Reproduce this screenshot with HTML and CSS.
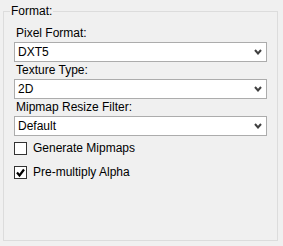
FILE: index.html
```html
<!DOCTYPE html>
<html lang="en">
  <head>
    <meta charset="UTF-8" />
    <meta name="viewport" content="width=device-width, initial-scale=1.0" />
    <title>Format</title>
    <link rel="stylesheet" href="styles.css">
  </head>
  <body>
    <!-- texture format group -->
    <fieldset class="group">
      <legend>Format:</legend>

      <div class="field-label">Pixel Format:</div>
      <div class="combo">
        <span>DXT5</span>
        <svg class="arrow" width="8" height="6" viewBox="0 0 8 6"><path d="M1 1 L4 4.5 L7 1" fill="none" stroke="#404040" stroke-width="2"/></svg>
      </div>

      <div class="field-label">Texture Type:</div>
      <div class="combo">
        <span>2D</span>
        <svg class="arrow" width="8" height="6" viewBox="0 0 8 6"><path d="M1 1 L4 4.5 L7 1" fill="none" stroke="#404040" stroke-width="2"/></svg>
      </div>

      <div class="field-label">Mipmap Resize Filter:</div>
      <div class="combo">
        <span>Default</span>
        <svg class="arrow" width="8" height="6" viewBox="0 0 8 6"><path d="M1 1 L4 4.5 L7 1" fill="none" stroke="#404040" stroke-width="2"/></svg>
      </div>

      <!-- options -->
      <div class="checks">
        <label class="check-row">
          <span class="box"></span>
          Generate Mipmaps
        </label>
        <label class="check-row">
          <span class="box"><svg width="11" height="11" viewBox="0 0 11 11"><path d="M2 5.5 L4.5 8.5 L9 2.5" fill="none" stroke="#000" stroke-width="2.2"/></svg></span>
          Pre-multiply Alpha
        </label>
      </div>
    </fieldset>
  </body>
</html>
```

FILE: styles.css
```css
body {
  margin: 0;
  background-color: #f0f0f0;
  color: #000;
  font-family: "Liberation Sans", Arial, sans-serif;
  font-size: 12px;
}
.group {
  box-sizing: border-box;
  margin: 4px 5px 0 3px;
  padding: 7px 10px 0 10px;
  height: 237px;
  border: 1px solid #dcdcdc;
  min-width: 0;
}
.group legend {
  margin-left: -4px;
  padding: 0 1px;
  line-height: 14px;
}
.field-label {
  padding-left: 2px;
  line-height: 17px;
  height: 17px;
}
.combo {
  box-sizing: border-box;
  height: 20px;
  display: flex;
  align-items: center;
  justify-content: space-between;
  padding: 0 4px 0 3px;
  background-color: #fff;
  border: 1px solid #acacac;
}
.combo .arrow {
  display: block;
}
.check-row {
  display: flex;
  align-items: center;
  gap: 6px;
  height: 24px;
}
.box {
  box-sizing: border-box;
  width: 13px;
  height: 13px;
  background-color: #fff;
  border: 1px solid #333;
  display: flex;
}
```
